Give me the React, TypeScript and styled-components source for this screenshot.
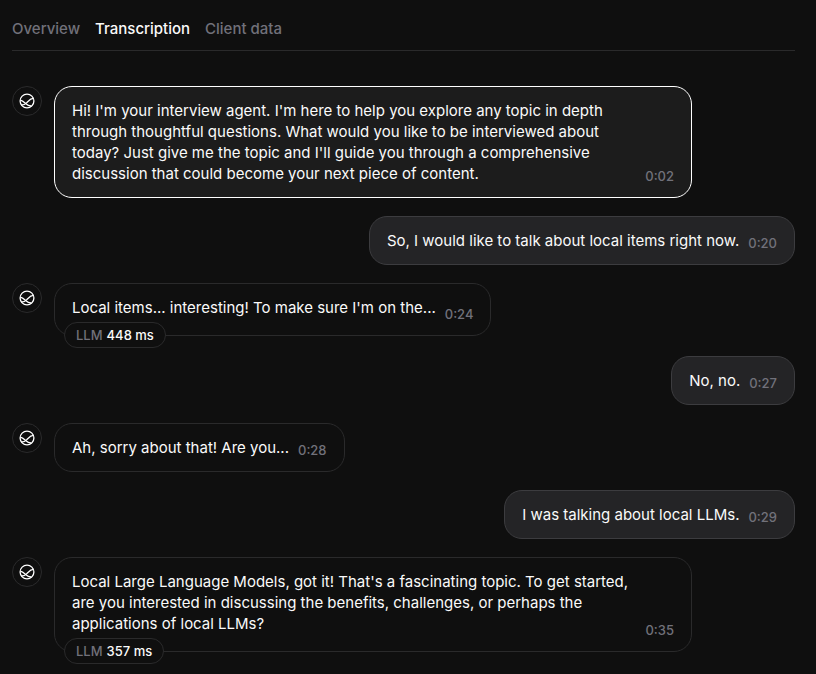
import React from "react";
import styled, { createGlobalStyle, css } from "styled-components";

const GlobalStyle = createGlobalStyle`
  *, *::before, *::after { box-sizing: border-box; }
  body {
    margin: 0;
    background: #0f0f0f;
    color: #fafafa;
    font-family: Inter, "Liberation Sans", sans-serif;
    font-size: 15px;
  }
`;

const Page = styled.main`
  padding: 16px 21px 20px 12px;
`;

const Tabs = styled.nav`
  display: flex;
  gap: 15px;
  height: 35px;
  border-bottom: 1px solid #2a2a2b;
`;

const Tab = styled.button<{ $active?: boolean }>`
  height: 26px;
  padding: 0;
  border: 0;
  background: none;
  font: 500 15px/26px Inter, "Liberation Sans", sans-serif;
  color: ${(p) => (p.$active ? "#fafafa" : "#71717a")};
  cursor: pointer;
`;

const Conversation = styled.section`
  display: flex;
  flex-direction: column;
  gap: 18px;
  padding-top: 35px;
`;

const Row = styled.article<{ $mine?: boolean; $badged?: boolean }>`
  display: flex;
  align-items: flex-start;
  gap: 12px;
  justify-content: ${(p) => (p.$mine ? "flex-end" : "flex-start")};
  margin-bottom: ${(p) => (p.$badged ? "2px" : "0")};
`;

const Avatar = styled.div`
  display: flex;
  flex: none;
  align-items: center;
  justify-content: center;
  width: 30px;
  height: 30px;
  border: 1px solid #2a2a2b;
  border-radius: 50%;
`;

type Look = "agent" | "active" | "user";

const looks = {
  agent: css`
    background: #0f0f0f;
    border-color: #2a2a2b;
  `,
  active: css`
    background: #1c1c1c;
    border-color: #ffffff;
  `,
  user: css`
    background: #242426;
    border-color: #3c3c3f;
  `,
};

const Bubble = styled.div<{ $look: Look }>`
  position: relative;
  display: flex;
  align-items: flex-end;
  gap: 9px;
  max-width: 638px;
  padding: 13px 17px;
  border: 1px solid;
  border-radius: 18px;
  ${(p) => looks[p.$look]}
`;

const Message = styled.p<{ $badged?: boolean }>`
  flex: 1;
  margin: 0;
  padding-bottom: ${(p) => (p.$badged ? "4px" : "0")};
  line-height: 21px;
`;

const Time = styled.time`
  flex: none;
  font-size: 13px;
  font-weight: 500;
  line-height: 16px;
  color: #71717a;
`;

const Badge = styled.div`
  position: absolute;
  left: 9px;
  bottom: -13px;
  display: flex;
  gap: 4px;
  padding: 0 11px;
  border: 1px solid #2a2a2b;
  border-radius: 13px;
  background: #0f0f0f;
  font-size: 13px;
  font-weight: 500;
  line-height: 24px;
  white-space: nowrap;
`;

const BadgeLabel = styled.span`
  color: #71717a;
`;

const AgentIcon = () => (
  <svg width="16" height="16" viewBox="0 0 16 16" fill="none" stroke="#fff" strokeWidth="1.3" aria-hidden="true">
    <circle cx="8" cy="8" r="6.9" />
    <path d="M1.3 7.2C3.6 7.6 5.2 9.2 6.6 10.5C8.4 12.2 10.2 13.2 12.6 13" />
    <path d="M2.4 12C4.4 12.2 6.2 11.2 7.8 9.6C10 7.4 11.4 5.4 14.6 5.4" />
  </svg>
);

interface Entry {
  text: string;
  time: string;
  look: Look;
  latency?: string;
}

const entries: Entry[] = [
  {
    text: "Hi! I'm your interview agent. I'm here to help you explore any topic in depth through thoughtful questions. What would you like to be interviewed about today? Just give me the topic and I'll guide you through a comprehensive discussion that could become your next piece of content.",
    time: "0:02",
    look: "active",
  },
  { text: "So, I would like to talk about local items right now.", time: "0:20", look: "user" },
  { text: "Local items... interesting! To make sure I'm on the...", time: "0:24", look: "agent", latency: "448 ms" },
  { text: "No, no.", time: "0:27", look: "user" },
  { text: "Ah, sorry about that! Are you...", time: "0:28", look: "agent" },
  { text: "I was talking about local LLMs.", time: "0:29", look: "user" },
  {
    text: "Local Large Language Models, got it! That's a fascinating topic. To get started, are you interested in discussing the benefits, challenges, or perhaps the applications of local LLMs?",
    time: "0:35",
    look: "agent",
    latency: "357 ms",
  },
];

export default function App() {
  return (
    <>
      <GlobalStyle />
      <Page>
        <Tabs>
          <Tab type="button">Overview</Tab>
          <Tab type="button" $active aria-current="page">Transcription</Tab>
          <Tab type="button">Client data</Tab>
        </Tabs>
        <Conversation>
          {entries.map(({ text, time, look, latency }) => (
            <Row key={time} $mine={look === "user"} $badged={!!latency}>
              {look !== "user" && (
                <Avatar>
                  <AgentIcon />
                </Avatar>
              )}
              <Bubble $look={look}>
                <Message $badged={!!latency}>{text}</Message>
                <Time>{time}</Time>
                {latency && (
                  <Badge>
                    <BadgeLabel>LLM</BadgeLabel>
                    <span>{latency}</span>
                  </Badge>
                )}
              </Bubble>
            </Row>
          ))}
        </Conversation>
      </Page>
    </>
  );
}
